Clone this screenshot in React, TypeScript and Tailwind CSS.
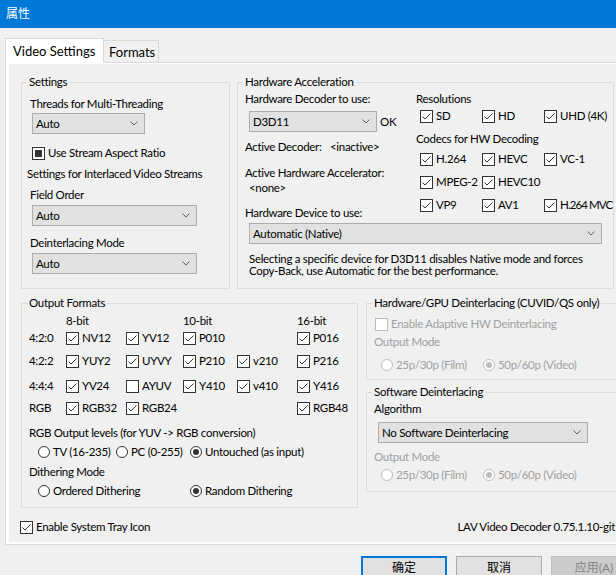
import type { ReactNode } from 'react'

type BoxProps = { on?: boolean; mixed?: boolean; disabled?: boolean }

const Check = ({ on = true, mixed = false, disabled = false }: BoxProps) => (
  <span
    className={`flex h-[13px] w-[13px] shrink-0 items-center justify-center border bg-white ${
      disabled ? 'border-[#bcbcbc]' : 'border-[#333333]'
    }`}
  >
    {mixed && <span className="h-[7px] w-[7px] bg-[#333333]" />}
    {on && !mixed && (
      <svg width="11" height="11" viewBox="0 0 11 11">
        <polyline points="1.5,5.5 4,8 9.5,2.5" fill="none" stroke="#333333" strokeWidth="1" />
      </svg>
    )}
  </span>
)

const Radio = ({ on = false, disabled = false }: BoxProps) => (
  <span
    className={`flex h-[12px] w-[12px] shrink-0 items-center justify-center rounded-full border bg-white ${
      disabled ? 'border-[#bcbcbc]' : 'border-[#333333]'
    }`}
  >
    {on && (
      <span className={`h-[6px] w-[6px] rounded-full ${disabled ? 'bg-[#bcbcbc]' : 'bg-[#333333]'}`} />
    )}
  </span>
)

const CheckItem = ({
  label,
  on = true,
  disabled = false,
  className = '',
}: {
  label: string
  on?: boolean
  disabled?: boolean
  className?: string
}) => (
  <span className={`flex items-center gap-[3px] whitespace-nowrap ${disabled ? 'text-[#a0a0a0]' : ''} ${className}`}>
    <Check on={on} disabled={disabled} />
    {label}
  </span>
)

const RadioItem = ({
  label,
  on = false,
  disabled = false,
  className = '',
}: {
  label: string
  on?: boolean
  disabled?: boolean
  className?: string
}) => (
  <span className={`flex shrink-0 items-center gap-[3px] whitespace-nowrap ${disabled ? 'text-[#a0a0a0]' : ''} ${className}`}>
    <Radio on={on} disabled={disabled} />
    {label}
  </span>
)

const Combo = ({ text, className = '' }: { text: string; className?: string }) => (
  <div
    className={`flex h-[21px] shrink-0 items-center justify-between border border-[#adadad] bg-[#e1e1e1] pl-[3px] pr-[6px] ${className}`}
  >
    <span className="whitespace-nowrap">{text}</span>
    <svg width="8" height="5" viewBox="0 0 8 5">
      <polyline points="0.5,0.5 4,4 7.5,0.5" fill="none" stroke="#606060" strokeWidth="1" />
    </svg>
  </div>
)

const Group = ({ title, className = '', children }: { title: string; className?: string; children: ReactNode }) => (
  <fieldset className={`shrink-0 border border-[#dcdcdc] ${className}`}>
    <legend className="ml-[5px] whitespace-nowrap px-[2px] leading-[14px]">{title}</legend>
    {children}
  </fieldset>
)

const App = () => {
  return (
    <div className="h-[575px] w-[616px] overflow-hidden whitespace-nowrap bg-[#f0f0f0] font-['Lato','Noto_Sans_CJK_SC',sans-serif] text-[11.5px] leading-[14px] tracking-[-0.3px] text-black">
      {/* Title bar */}
      <div className="flex h-[28px] items-center bg-[#0078d7] pl-[6px] text-[12px] tracking-normal text-white">属性</div>

      {/* Tabs */}
      <div className="relative z-10 mt-[10px] flex h-[25px] items-end pl-[5px] text-[13px] tracking-normal">
        <div className="flex h-[25px] w-[99px] items-center border border-b-0 border-[#d9d9d9] bg-white pl-[7px]">
          Video Settings
        </div>
        <div className="flex h-[23px] w-[55px] items-center border border-l-0 border-[#d9d9d9] bg-[#f0f0f0] pl-[5px]">
          Formats
        </div>
      </div>

      {/* Tab body */}
      <div className="-mt-px ml-[5px] w-[640px] border border-[#d9d9d9] bg-white pb-[2px] pl-[3px] pt-[1px]">
        <div className="h-[478px] w-[630px] bg-[#f0f0f0] pl-[12px] pt-[11px]">
          {/* Row 1 */}
          <div className="flex">
            <Group title="Settings" className="h-[214px] w-[209px]">
              <div className="flex flex-col items-start px-[8px]">
                <div className="mt-[8px]">Threads for Multi-Threading</div>
                <Combo text="Auto" className="ml-[2px] mt-[2px] w-[113px]" />
                <div className="ml-[2px] mt-[12px] flex h-[14px] items-center gap-[3px]">
                  <Check mixed />
                  Use Stream Aspect Ratio
                </div>
                <div className="-ml-[3px] mt-[7px]">Settings for Interlaced Video Streams</div>
                <div className="mt-[7px]">Field Order</div>
                <Combo text="Auto" className="ml-[2px] mt-[3px] w-[165px]" />
                <div className="mt-[10px]">Deinterlacing Mode</div>
                <Combo text="Auto" className="ml-[2px] mt-[3px] w-[165px]" />
              </div>
            </Group>

            <Group title="Hardware Acceleration" className="ml-[7px] h-[214px] w-[377px]">
              <div className="pl-[7px]">
                <div className="flex">
                  <div className="flex w-[171px] shrink-0 flex-col items-start">
                    <div className="mt-[3px]">Hardware Decoder to use:</div>
                    <div className="mt-[5px] flex items-center">
                      <Combo text="D3D11" className="ml-[4px] w-[128px]" />
                      <span className="ml-[3px]">OK</span>
                    </div>
                    <div className="mt-[8px] flex">
                      <span className="w-[85px]">Active Decoder:</span>
                      <span>&lt;inactive&gt;</span>
                    </div>
                    <div className="mt-[12px]">Active Hardware Accelerator:</div>
                    <div className="ml-[4px] mt-[1px]">&lt;none&gt;</div>
                    <div className="mt-[11px]">Hardware Device to use:</div>
                  </div>
                  <div className="flex flex-col">
                    <div className="mt-[3px]">Resolutions</div>
                    <div className="ml-[4px] mt-[3px] grid h-[14px] grid-cols-[62px_62px_auto] items-center">
                      <CheckItem label="SD" />
                      <CheckItem label="HD" />
                      <CheckItem label="UHD (4K)" />
                    </div>
                    <div className="mt-[9px]">Codecs for HW Decoding</div>
                    <div className="ml-[4px] mt-[6px] grid h-[14px] grid-cols-[62px_62px_auto] items-center">
                      <CheckItem label="H.264" />
                      <CheckItem label="HEVC" />
                      <CheckItem label="VC-1" />
                    </div>
                    <div className="ml-[4px] mt-[9px] grid h-[14px] grid-cols-[62px_62px_auto] items-center">
                      <CheckItem label="MPEG-2" />
                      <CheckItem label="HEVC10" />
                    </div>
                    <div className="ml-[4px] mt-[9px] grid h-[14px] grid-cols-[62px_62px_auto] items-center">
                      <CheckItem label="VP9" />
                      <CheckItem label="AV1" />
                      <CheckItem label="H.264 MVC" className="tracking-[-0.9px]" />
                    </div>
                  </div>
                </div>
                <Combo text="Automatic (Native)" className="ml-[4px] mt-[3px] w-[353px]" />
                <div className="ml-[4px] mt-[9px] leading-[12px]">
                  Selecting a specific device for D3D11 disables Native mode and forces
                  <br />
                  Copy-Back, use Automatic for the best performance.
                </div>
              </div>
            </Group>
          </div>

          {/* Row 2 */}
          <div className="mt-[7px] flex">
            <Group title="Output Formats" className="h-[212px] w-[337px]">
              <div className="pl-[7px]">
                <div className="mt-[4px] grid grid-cols-[37px_60px_57px_54px_60px_auto] items-center">
                  <span className="h-[14px]" />
                  <span>8-bit</span>
                  <span />
                  <span>10-bit</span>
                  <span />
                  <span>16-bit</span>

                  <span className="flex h-[20px] items-center">4:2:0</span>
                  <CheckItem label="NV12" />
                  <CheckItem label="YV12" />
                  <CheckItem label="P010" />
                  <span />
                  <CheckItem label="P016" />

                  <span className="flex h-[26px] items-center">4:2:2</span>
                  <CheckItem label="YUY2" />
                  <CheckItem label="UYVY" />
                  <CheckItem label="P210" />
                  <CheckItem label="v210" />
                  <CheckItem label="P216" />

                  <span className="flex h-[24px] items-center">4:4:4</span>
                  <CheckItem label="YV24" />
                  <CheckItem label="AYUV" on={false} />
                  <CheckItem label="Y410" />
                  <CheckItem label="v410" />
                  <CheckItem label="Y416" />

                  <span className="flex h-[20px] items-center">RGB</span>
                  <CheckItem label="RGB32" />
                  <CheckItem label="RGB24" />
                  <span />
                  <span />
                  <CheckItem label="RGB48" />
                </div>
                <div className="mt-[8px]">RGB Output levels (for YUV -&gt; RGB conversion)</div>
                <div className="ml-[9px] mt-[2px] flex h-[20px] items-center">
                  <RadioItem label="TV (16-235)" className="w-[78px]" />
                  <RadioItem label="PC (0-255)" className="w-[74px]" />
                  <RadioItem label="Untouched (as input)" on />
                </div>
                <div className="mt-[3px]">Dithering Mode</div>
                <div className="ml-[9px] mt-[2px] flex h-[20px] items-center">
                  <RadioItem label="Ordered Dithering" className="w-[152px]" />
                  <RadioItem label="Random Dithering" on />
                </div>
              </div>
            </Group>

            <div className="ml-[8px] flex flex-col">
              <Group title="Hardware/GPU Deinterlacing (CUVID/QS only)" className="h-[84px] w-[262px]">
                <div className="pl-[7px]">
                  <div className="ml-[1px] mt-[7px] flex h-[14px] items-center">
                    <CheckItem label="Enable Adaptive HW Deinterlacing" on={false} disabled />
                  </div>
                  <div className="mt-[4px] text-[#a0a0a0]">Output Mode</div>
                  <div className="ml-[7px] mt-[6px] flex h-[20px] items-center">
                    <RadioItem label="25p/30p (Film)" disabled className="w-[102px]" />
                    <RadioItem label="50p/60p (Video)" on disabled />
                  </div>
                </div>
              </Group>
              <Group title="Software Deinterlacing" className="mt-[5px] h-[107px] w-[262px]">
                <div className="flex flex-col items-start pl-[7px]">
                  <div className="mt-[3px]">Algorithm</div>
                  <Combo text="No Software Deinterlacing" className="ml-[4px] mt-[6px] w-[210px]" />
                  <div className="mt-[7px] text-[#a0a0a0]">Output Mode</div>
                  <div className="ml-[7px] mt-[1px] flex h-[20px] items-center">
                    <RadioItem label="25p/30p (Film)" disabled className="w-[102px]" />
                    <RadioItem label="50p/60p (Video)" on disabled />
                  </div>
                </div>
              </Group>
            </div>
          </div>

          {/* Row 3 */}
          <div className="-ml-px mt-[9px] flex h-[20px] w-[595px] items-center">
            <CheckItem label="Enable System Tray Icon" />
            <span className="ml-auto">LAV Video Decoder 0.75.1.10-git</span>
          </div>
        </div>
      </div>

      {/* Dialog buttons */}
      <div className="ml-[361px] mt-[11px] flex gap-[9px] text-[12px] tracking-normal">
        <button className="flex h-[23px] w-[86px] shrink-0 items-center justify-center border-2 border-[#0078d7] bg-[#e1e1e1]">
          确定
        </button>
        <button className="flex h-[23px] w-[86px] shrink-0 items-center justify-center border border-[#adadad] bg-[#e1e1e1]">
          取消
        </button>
        <button className="flex h-[23px] w-[86px] shrink-0 items-center justify-center border border-[#bfbfbf] bg-[#cccccc] text-[#838383]">
          应用(A)
        </button>
      </div>
    </div>
  )
}

export default App
